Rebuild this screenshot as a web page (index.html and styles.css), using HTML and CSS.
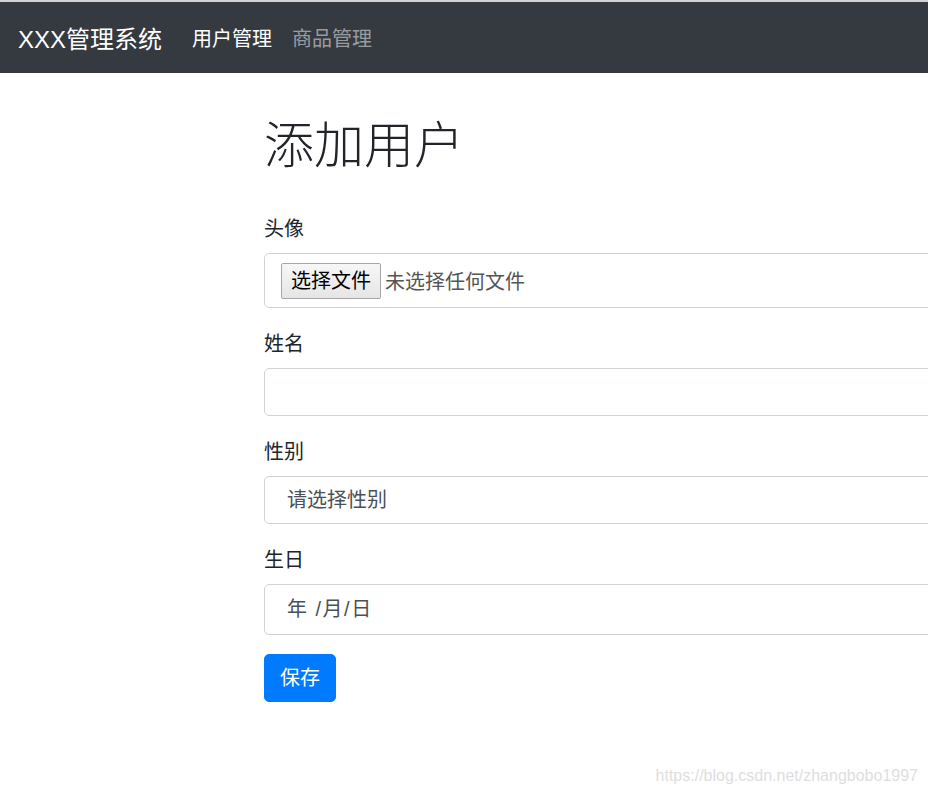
FILE: index.html
```html
<!DOCTYPE html>
<html lang="zh-CN">
<head>
<meta charset="utf-8">
<title>添加用户</title>
<link rel="stylesheet" href="styles.css">
</head>
<body>
<nav class="navbar">
  <a class="brand" href="#">XXX管理系统</a>
  <a class="nav-link active" href="#">用户管理</a>
  <a class="nav-link" href="#">商品管理</a>
</nav>
<main class="page">
  <form class="form">
    <h1 class="title">添加用户</h1>
    <div class="group">
      <label class="label">头像</label>
      <div class="file-box">
        <span class="file-btn">选择文件</span>
        <span class="file-text">未选择任何文件</span>
      </div>
    </div>
    <div class="group">
      <label class="label">姓名</label>
      <input class="control" type="text">
    </div>
    <div class="group">
      <label class="label">性别</label>
      <div class="control">请选择性别</div>
    </div>
    <div class="group">
      <label class="label">生日</label>
      <div class="control control-date">年 /月/日</div>
    </div>
    <button class="btn" type="button">保存</button>
  </form>
</main>
<div class="watermark">https://blog.csdn.net/zhangbobo1997</div>
</body>
</html>
```
FILE: styles.css
```css
html, body {
  margin: 0;
  padding: 0;
  background: #fff;
  overflow: hidden;
}
body {
  font-family: "Liberation Sans", "Noto Sans CJK SC", sans-serif;
  color: #212529;
  font-size: 20px;
  height: 794px;
  position: relative;
}
.navbar {
  border-top: 2px solid #d3d3d3;
  background: #343a40;
  height: 73px;
  display: flex;
  align-items: center;
  padding: 0 18px;
  box-sizing: border-box;
}
.brand {
  color: #fff;
  font-size: 24px;
  line-height: 36px;
  text-decoration: none;
  margin-right: 20px;
  padding-top: 4px;
}
.nav-link {
  color: rgba(255, 255, 255, 0.5);
  font-size: 20px;
  line-height: 30px;
  text-decoration: none;
  padding: 2px 10px 0;
}
.nav-link.active {
  color: #fff;
}
.page {
  width: 100%;
  overflow: hidden;
}
.form {
  margin-left: 264px;
  width: 720px;
}
.title {
  margin: 43px 0 38px;
  font-size: 50px;
  line-height: 60px;
  font-weight: 300;
  color: #212529;
}
.group {
  margin-bottom: 21px;
}
.label {
  display: block;
  line-height: 30px;
  margin-bottom: 9px;
}
.file-box {
  height: 55px;
  box-sizing: border-box;
  border: 1px solid #ced4da;
  border-radius: 5px;
  display: flex;
  align-items: center;
  padding-left: 16px;
}
.file-btn {
  height: 36px;
  box-sizing: border-box;
  border: 1px solid #a6a6a6;
  border-radius: 2px;
  background: linear-gradient(#f7f7f7, #e6e6e6);
  color: #000;
  padding: 0 9px;
  line-height: 34px;
  font-size: 20px;
}
.file-text {
  margin-left: 4px;
  color: #555;
}
.control {
  display: block;
  width: 100%;
  height: 48px;
  box-sizing: border-box;
  border: 1px solid #ced4da;
  border-radius: 5px;
  padding: 0 22px;
  font: inherit;
  font-size: 20px;
  line-height: 46px;
  color: #495057;
  background: #fff;
  outline: none;
}
.control-date {
  height: 51px;
  line-height: 49px;
  letter-spacing: 1.5px;
}
.btn {
  margin-top: -2px;
  height: 48px;
  padding: 0 15px;
  border: 1px solid #007bff;
  border-radius: 5px;
  background: #007bff;
  color: #fff;
  font: inherit;
  font-size: 20px;
  line-height: 46px;
}
.watermark {
  position: absolute;
  right: 10px;
  bottom: 9px;
  font-family: "Liberation Sans", sans-serif;
  font-size: 16px;
  color: #dedede;
}
```
